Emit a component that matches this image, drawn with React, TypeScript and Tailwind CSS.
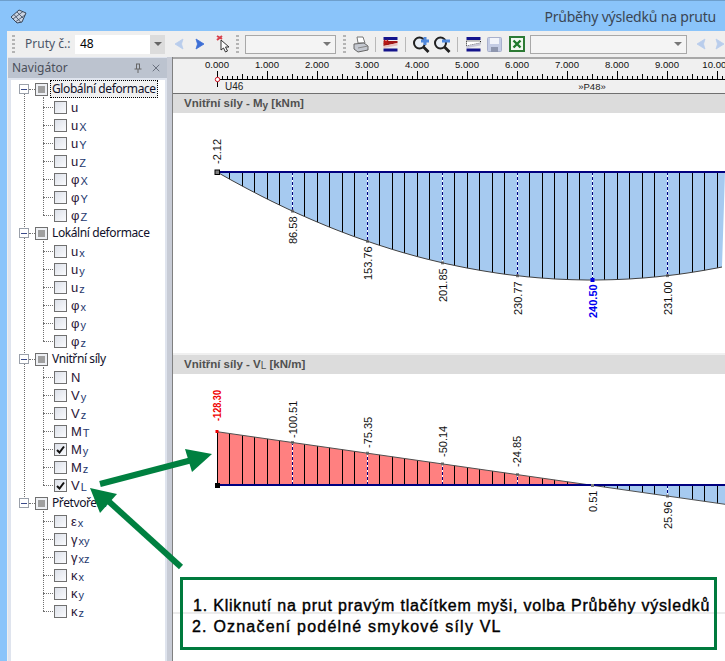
import React from 'react';
import { X } from 'lucide-react';

const treeGroups = [
  {
    title: 'Globální deformace',
    items: [['u', ''], ['u', 'X'], ['u', 'Y'], ['u', 'Z'], ['φ', 'X'], ['φ', 'Y'], ['φ', 'Z']],
  },
  {
    title: 'Lokální deformace',
    items: [['u', 'x'], ['u', 'y'], ['u', 'z'], ['φ', 'x'], ['φ', 'y'], ['φ', 'z']],
  },
  {
    title: 'Vnitřní síly',
    items: [['N', ''], ['V', 'y'], ['V', 'z'], ['M', 'T'], ['M', 'y'], ['M', 'z'], ['V', 'L']],
  },
  {
    title: 'Přetvoření',
    items: [['ε', 'x'], ['γ', 'xy'], ['γ', 'xz'], ['κ', 'x'], ['κ', 'y'], ['κ', 'z']],
  },
];

const checkedItems = ['My', 'VL'];

function Grip() {
  return (
    <span className="flex flex-col gap-[2px] w-[3px] shrink-0">
      {[0, 1, 2, 3, 4].map((i) => (
        <span key={i} className="w-[3px] h-[2px] bg-[#b4b4b4]" />
      ))}
    </span>
  );
}

function Sep() {
  return <span className="block w-px h-[15px] bg-[#b8b8b8] shrink-0" />;
}

function Triangle({ dir, color }: { dir: 'left' | 'right'; color: string }) {
  return (
    <svg width="10" height="12" viewBox="0 0 10 12" className="shrink-0">
      <path d={dir === 'left' ? 'M9 1 L1 6 L9 11 L7.5 6 Z' : 'M1 1 L9 6 L1 11 L2.5 6 Z'} fill={color} stroke={color} strokeWidth="0.8" strokeLinejoin="round" />
    </svg>
  );
}

function PinCursor() {
  return (
    <svg width="14" height="18" viewBox="0 0 14 18" className="shrink-0">
      <path d="M1 1 L6 4 M6 1 L1 5" stroke="#d8404c" strokeWidth="2" />
      <path d="M5 5 L5 15 L7.5 13 L9.5 17 L11.5 16 L9.5 12 L13 12 Z" fill="#fff" stroke="#333" strokeWidth="1" />
    </svg>
  );
}

function Printer() {
  return (
    <svg width="16" height="17" viewBox="0 0 16 17" className="shrink-0">
      <path d="M4 1 L10 1 L12 7 L5 7 Z" fill="#fff" stroke="#777" />
      <path d="M1 8 L11 7 L15 10 L15 14 L5 16 L1 13 Z" fill="#c4c8d0" stroke="#666" />
      <path d="M5 12 L15 10" stroke="#888" />
    </svg>
  );
}

function Stripes({ checker }: { checker?: boolean }) {
  return (
    <svg width="15" height="16" viewBox="0 0 15 16" className="shrink-0">
      <path d="M0.5 1 H14.5 V4 H0.5 Z" fill="#14148c" />
      <path d="M0.5 5 L14.5 5 L14.5 7 L0.5 10 Z" fill={checker ? '#fff' : '#a01818'} stroke={checker ? '#222' : 'none'} strokeDasharray="1 1" />
      {!checker && <path d="M1 4 L5 8 M5 4 L1 8" stroke="#c01818" strokeWidth="1.4" />}
      <path d="M0.5 10 L14.5 7 V9.5 L0.5 12 Z" fill={checker ? '#c8c8d8' : '#e8c0c0'} />
      <path d="M0.5 12.5 H14.5 V15.5 H0.5 Z" fill="#14148c" />
    </svg>
  );
}

function Magnifier({ plus }: { plus?: boolean }) {
  return (
    <svg width="17" height="17" viewBox="0 0 17 17" className="shrink-0">
      <circle cx="6.5" cy="7" r="5.5" fill="#e8eef6" stroke="#202020" strokeWidth="2" />
      <path d="M10.5 11 L15.5 16" stroke="#202020" strokeWidth="2.8" />
      <path d={plus ? 'M8 5 H16 M12 1 V9' : 'M8 5 H16'} stroke="#4f88dc" strokeWidth="3" fill="none" />
    </svg>
  );
}

function SaveIcon() {
  return (
    <svg width="15" height="15" viewBox="0 0 15 15" className="shrink-0">
      <rect x="0.5" y="0.5" width="14" height="14" rx="1" fill="#c4cce4" stroke="#a8b0cc" />
      <rect x="3" y="1" width="9" height="6" fill="#f2f4fa" />
      <rect x="4" y="10" width="7" height="5" fill="#8e96ae" />
    </svg>
  );
}

function ExcelIcon() {
  return (
    <svg width="16" height="16" viewBox="0 0 16 16" className="shrink-0">
      <rect x="1" y="1" width="14" height="14" fill="#f2f8f0" stroke="#2c7a34" strokeWidth="2" />
      <path d="M4.5 4.5 L11.5 11.5 M11.5 4.5 L4.5 11.5" stroke="#1f7a2c" strokeWidth="2.4" />
    </svg>
  );
}

function SelectBox({ width }: { width: string }) {
  return (
    <div className={`${width} h-[19px] shrink-0 border border-[#a8a8a8] bg-[#f4f4f4] flex items-center justify-end pr-[4px]`}>
      <span className="w-0 h-0 border-x-[4px] border-x-transparent border-t-[4px] border-t-[#777]" />
    </div>
  );
}

function Toolbar() {
  return (
    <div className="h-[26px] flex items-center bg-[#efefef] pl-[5px] text-[#4a5568]">
      <Grip />
      <span className="ml-[10px] w-[50px] text-[12px] font-['Noto_Sans',sans-serif]">Pruty č.:</span>
      <div className="w-[90px] h-[19px] bg-white flex items-center justify-between text-[12px] text-black font-['Noto_Sans',sans-serif]">
        <span className="pl-[5px]">48</span>
        <span className="w-[15px] h-full bg-[#dcdcdc] flex items-center justify-center">
          <span className="w-0 h-0 border-x-[4px] border-x-transparent border-t-[4px] border-t-[#666]" />
        </span>
      </div>
      <span className="ml-[9px]"><Triangle dir="left" color="#b9cdec" /></span>
      <span className="ml-[11px]"><Triangle dir="right" color="#3d6fd6" /></span>
      <span className="ml-[11px]"><PinCursor /></span>
      <span className="ml-[6px]"><Grip /></span>
      <span className="ml-[6px]"><SelectBox width="w-[91px]" /></span>
      <span className="ml-[7px]"><Grip /></span>
      <span className="ml-[7px]"><Printer /></span>
      <span className="ml-[6px]"><Sep /></span>
      <span className="ml-[7px]"><Stripes /></span>
      <span className="ml-[7px]"><Sep /></span>
      <span className="ml-[7px]"><Magnifier plus /></span>
      <span className="ml-[4px]"><Magnifier /></span>
      <span className="ml-[6px]"><Sep /></span>
      <span className="ml-[8px]"><Stripes checker /></span>
      <span className="ml-[6px]"><SaveIcon /></span>
      <span className="ml-[7px]"><ExcelIcon /></span>
      <span className="ml-[5px]"><SelectBox width="w-[157px]" /></span>
      <span className="ml-[9px]"><Triangle dir="left" color="#b9cdec" /></span>
      <span className="ml-[9px]"><Triangle dir="right" color="#b9cdec" /></span>
    </div>
  );
}

function TreeRow({ main, sub }: { main: string; sub: string }) {
  const checked = checkedItems.includes(main + sub);
  return (
    <div className="relative h-[18px] flex items-center pl-[43px]">
      <span className="absolute left-[32px] top-[9px] w-[10px] border-t border-dotted border-[#707070]" />
      <span className="w-[13px] h-[13px] shrink-0 border border-[#707070] bg-gradient-to-br from-[#dde1ea] to-[#fafbfd] flex items-center justify-center">
        {checked && (
          <svg width="9" height="9" viewBox="0 0 9 9">
            <path d="M1 5 L3.5 7.5 L8 1.5" fill="none" stroke="#111" strokeWidth="2" />
          </svg>
        )}
      </span>
      <span className="ml-[4px] text-[13px] text-[#2a1436] font-['Liberation_Sans',sans-serif] leading-none">
        {main}
        <span className="text-[11px] text-[#24386e] relative top-[1px] ml-[1px]">{sub}</span>
      </span>
    </div>
  );
}

function Navigator() {
  return (
    <div className="w-[159px] shrink-0 flex flex-col bg-[#dfe4ee]">
      <div className="h-[20px] mt-[1px] flex items-center bg-[#bcc3cf] pl-[4px] pr-[3px] text-[12px] text-[#4a4f5a] font-['Noto_Sans',sans-serif]">
        <span className="flex-1">Navigátor</span>
        <svg width="10" height="10" viewBox="0 0 10 10" className="mr-[7px]">
          <path d="M3 1 H7 M3.5 1 V6 M6.5 1 V6 M1.5 6 H8.5 M5 6 V10" stroke="#666" strokeWidth="1" fill="none" />
        </svg>
        <X size={12} className="text-[#6b7280] mr-[2px]" />
      </div>
      <div className="flex-1 mt-[2px] ml-[3px] mr-[2px] bg-white overflow-hidden">
        {treeGroups.map((group, idx) => (
          <div key={group.title} className="relative">
            {idx < treeGroups.length - 1 && (
              <span className="absolute left-[13px] top-[14px] -bottom-[5px] border-l border-dotted border-[#707070]" />
            )}
            <span className="absolute left-[32px] top-[17px] bottom-[9px] border-l border-dotted border-[#707070]" />
            <div className="relative h-[18px] flex items-center pl-[8px]">
              <span className="w-[10px] h-[10px] shrink-0 border border-[#9aa0aa] bg-white flex items-center justify-center">
                <span className="w-[6px] h-px bg-[#3a4a8a]" />
              </span>
              <span className="w-[6px] border-t border-dotted border-[#707070]" />
              <span className="w-[13px] h-[13px] shrink-0 border border-[#707070] bg-[#eef0f4] flex items-center justify-center">
                <span className="w-[7px] h-[7px] bg-[#a0a0a0]" />
              </span>
              <span
                className={
                  idx === 0
                    ? "ml-[2px] pl-[1px] pr-px h-[18px] leading-[16px] border border-dotted border-black bg-[#f0f0f0] text-[12px] text-[#10102a] font-['Noto_Sans',sans-serif] whitespace-nowrap tracking-[-0.4px]"
                    : "ml-[4px] text-[12px] text-[#10102a] font-['Noto_Sans',sans-serif] whitespace-nowrap tracking-[-0.4px]"
                }
              >
                {group.title}
              </span>
            </div>
            {group.items.map(([main, sub]) => (
              <TreeRow key={main + sub} main={main} sub={sub} />
            ))}
          </div>
        ))}
      </div>
    </div>
  );
}

function Ruler() {
  const ticks = [];
  for (let i = 0; i <= 102; i++) {
    const x = Math.floor(217 + i * 5) + 0.5;
    const h = i % 10 === 0 ? 8 : i % 5 === 0 ? 5 : 3;
    ticks.push(<line key={i} x1={x} x2={x} y1={79 - h} y2={79} stroke="#000" strokeWidth="1" />);
  }
  const labels = ['0.000', '1.000', '2.000', '3.000', '4.000', '5.000', '6.000', '7.000', '8.000', '9.000', '10.000'];
  return (
    <svg viewBox="173 57 552 37" width="552" height="37" className="block bg-[#f0f0f0] shrink-0">
      <rect x="173" y="57" width="552" height="2" fill="#a8a8a8" />
      {labels.map((t, i) => (
        <text key={t} x={217 + i * 50} y="68" textAnchor="middle" fontSize="9.6" fontFamily="Liberation Sans" fill="#111">
          {t}
        </text>
      ))}
      {ticks}
      <line x1="217" x2="725" y1="79.5" y2="79.5" stroke="#000" />
      <line x1="217.5" x2="217.5" y1="71" y2="87" stroke="#000" />
      <circle cx="217.5" cy="79.5" r="2.2" fill="#fff" stroke="#d01020" strokeWidth="1" />
      <text x="225" y="90" fontSize="10" fontFamily="Liberation Sans" fill="#222">U46</text>
      <text x="592" y="90" textAnchor="middle" fontSize="9.5" fontFamily="Liberation Sans" fill="#222">»P48»</text>
      <rect x="173" y="93" width="552" height="1" fill="#707070" />
    </svg>
  );
}

function VLabel({ x, y, text, color = '#111', bold = false, length }: { x: number; y: number; text: string; color?: string; bold?: boolean; length?: number }) {
  return (
    <text
      transform={`translate(${x + 4},${y}) rotate(-90)`}
      fontSize="11"
      fontFamily="Liberation Sans"
      fontWeight={bold ? 700 : 400}
      fill={color}
      textLength={length}
      lengthAdjust={length ? 'spacingAndGlyphs' : undefined}
    >
      {text}
    </text>
  );
}

function Bars({ top, edge, from, to }: { top: number; edge: (x: number) => number; from: number; to: number }) {
  const out = [];
  for (let k = from; k <= to; k++) {
    const x = Math.floor(217 + 12.5 * k) + 0.5;
    const y = edge(x);
    if (Math.abs(y - top) < 1) continue;
    if (k % 6 === 0 && k > 0) {
      out.push(<line key={`w${k}`} x1={x} x2={x} y1={top} y2={y} stroke="#fff" />);
      out.push(<line key={`d${k}`} x1={x} x2={x} y1={top} y2={y} stroke="#000080" strokeDasharray="3 2" />);
      out.push(<rect key={`n${k}`} x={x - 1.5} y={y - 1.5} width="3" height="3" fill="#808080" />);
    } else {
      out.push(<line key={k} x1={x} x2={x} y1={top} y2={y} stroke="#000" />);
    }
  }
  return <>{out}</>;
}

function MomentChart() {
  const edge = (x: number) => {
    const s = (x - 217) / 750;
    return 172 + 432 * s * (1 - s);
  };
  let curve = 'M217 172';
  for (let x = 222; x <= 725; x += 5) curve += ` L${x} ${edge(x).toFixed(1)}`;
  return (
    <svg viewBox="173 113 552 240" width="552" height="240" className="block shrink-0">
      <path d={`${curve} L725 172 Z`} fill="#a6caf0" />
      <Bars top={172} edge={edge} from={0} to={41} />
      <path d={curve} fill="none" stroke="#404040" strokeWidth="1" />
      <line x1="217" x2="725" y1="172" y2="172" stroke="#000080" strokeWidth="2" />
      <rect x="215" y="170" width="4.5" height="4.5" fill="#808080" stroke="#000" strokeWidth="1" />
      <rect x="590.5" y="278" width="4" height="4" fill="#0000e0" />
      <VLabel x={217} y={164} text="-2.12" />
      <VLabel x={293} y={244} text="86.58" />
      <VLabel x={367.5} y={280} text="153.76" />
      <VLabel x={442.5} y={302} text="201.85" />
      <VLabel x={517.5} y={315} text="230.77" />
      <VLabel x={592.5} y={318} text="240.50" color="#0000f0" bold />
      <VLabel x={667.5} y={315} text="231.00" />
    </svg>
  );
}

function ShearChart() {
  const edge = (x: number) => 485 - (53.3 * (590 - x)) / 373;
  return (
    <svg viewBox="173 374 552 238" width="552" height="238" className="block shrink-0">
      <path d={`M217 ${edge(217)} L590 485 L217 485 Z`} fill="#ff8080" />
      <path d={`M590 485 L725 ${edge(725)} L725 485 Z`} fill="#a6caf0" />
      <Bars top={485} edge={edge} from={0} to={41} />
      <line x1="217" x2="725" y1={edge(217)} y2={edge(725)} stroke="#505050" strokeWidth="1" />
      <line x1="217" x2="725" y1="485" y2="485" stroke="#000080" strokeWidth="2" />
      <rect x="215" y="483" width="5" height="5" fill="#000" />
      <rect x="215.5" y="430" width="3" height="3" fill="#f00000" />
      <rect x="591" y="484" width="3" height="3" fill="#808080" />
      <VLabel x={217} y={421} text="-128.30" color="#f00000" bold length={31} />
      <VLabel x={292.5} y={438} text="-100.51" />
      <VLabel x={367.5} y={448} text="-75.35" />
      <VLabel x={442.5} y={457} text="-50.14" />
      <VLabel x={517} y={467} text="-24.85" />
      <VLabel x={592.5} y={512} text="0.51" />
      <VLabel x={667.5} y={529} text="25.96" />
    </svg>
  );
}

function SectionBar({ children }: { children: React.ReactNode }) {
  return (
    <div className="h-[19px] shrink-0 bg-[#dcdcdc] pl-[11px] flex items-center text-[11.5px] font-bold text-[#505050] font-['Liberation_Sans',sans-serif]">
      {children}
    </div>
  );
}

export default function App() {
  return (
    <div className="relative w-[725px] h-[661px] overflow-hidden bg-[#8ac4fa]">
      <div className="h-[31px] flex items-center border-t border-[#6e9fcc] pl-[10px] pr-[9px]">
        <svg width="17" height="15" viewBox="0 0 17 15">
          <path d="M1 8 L9 1 L16 4 L12 13 L7 14 Z" fill="#c9d3e2" stroke="#39485c" strokeWidth="1" />
          <path d="M4 5.5 L11 13.5 M7 3 L14 10 M3 10 L13 2.5 M6 12.5 L15 6" stroke="#39485c" strokeWidth="0.8" />
        </svg>
        <span className="ml-auto text-[14px] text-[#3a4654] font-['Noto_Sans',sans-serif] tracking-[-0.2px]">Průběhy výsledků na prutu</span>
      </div>
      <div className="flex h-[630px] pl-[7px]">
        <div className="flex-1 flex flex-col min-w-0 bg-[#efefef]">
          <Toolbar />
          <div className="flex flex-1 min-h-0 pl-px">
            <Navigator />
            <div className="w-[6px] shrink-0 bg-[#c8ccd6] border-r border-[#808080]" />
            <div className="w-[552px] shrink-0 flex flex-col bg-white overflow-hidden">
              <Ruler />
              <SectionBar>
                Vnitřní síly - M<span className="text-[10px] relative top-[2px]">y</span>&nbsp;[kNm]
              </SectionBar>
              <MomentChart />
              <div className="h-[2px] shrink-0 bg-[#f0f0f0]" />
              <SectionBar>
                Vnitřní síly - V<span className="text-[10px] font-normal relative top-[1px]">L</span>&nbsp;[kN/m]
              </SectionBar>
              <ShearChart />
              <div className="h-[2px] shrink-0 bg-[#ececec]" />
            </div>
          </div>
        </div>
      </div>

      {/* Annotation arrows and note over the window */}
      <svg width="725" height="661" viewBox="0 0 725 661" className="absolute inset-0 pointer-events-none">
        <path d="M100 484 L192 460" stroke="#008040" strokeWidth="6" fill="none" />
        <path d="M212 454 L185 449 L192 472 Z" fill="#008040" />
        <path d="M181 567 L105 498" stroke="#008040" strokeWidth="6" fill="none" />
        <path d="M90 488 L117 494 L100 513 Z" fill="#008040" />
      </svg>
      <div className="absolute left-[180px] top-[577px] w-[537px] h-[73px] border-[3px] border-[#007a3d] pl-[9px] pt-[15px] text-[16px] leading-[21px] tracking-[0.8px] text-black font-['Liberation_Sans',sans-serif] [-webkit-text-stroke:0.4px_black] whitespace-nowrap">
        <div className="pl-[1px]">1. Kliknutí na prut pravým tlačítkem myši, volba Průběhy výsledků</div>
        <div className="tracking-[1.2px]">2. Označení podélné smykové síly VL</div>
      </div>
    </div>
  );
}
